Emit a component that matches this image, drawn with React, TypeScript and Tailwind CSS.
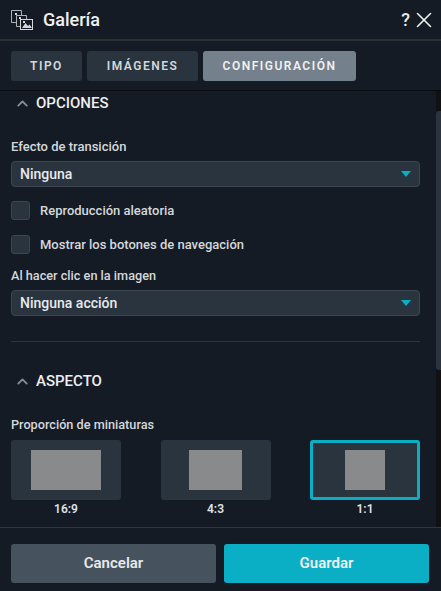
import { ChevronUp, X } from "lucide-react";

function GalleryIcon() {
  return (
    <svg width="22" height="20" viewBox="0 0 22 20" fill="none" className="text-[#d5d8db]">
      <path d="M5.5 12.5H0.5V0.5H10.5V5" stroke="currentColor" strokeWidth="1" opacity="0.8" />
      <path d="M10 16.5H5.5V5.5H15.5V9" stroke="currentColor" strokeWidth="1" opacity="0.8" />
      <rect x="9.5" y="9.5" width="12" height="10" fill="#141b25" stroke="currentColor" strokeWidth="1" />
      <path d="M11 18L14.5 13L17 16L18.5 14.5L21 18Z" fill="currentColor" />
      <rect x="4" y="3" width="2" height="2" fill="currentColor" />
      <rect x="8" y="7" width="2" height="2" fill="currentColor" />
      <rect x="12" y="11" width="2" height="2" fill="currentColor" />
    </svg>
  );
}

function Select({ value }: { value: string }) {
  return (
    <div className="flex h-[26px] items-center justify-between rounded-[4px] border border-[#3d4650] bg-[#2a343f] pl-2 pr-2">
      <span className="text-[14px] font-medium text-[#e8eaec]">{value}</span>
      <div className="h-0 w-0 border-x-[5px] border-t-[6px] border-x-transparent border-t-[#0aafc6]" />
    </div>
  );
}

function Check({ label }: { label: string }) {
  return (
    <div className="flex items-center gap-[10px]">
      <div className="h-[19px] w-[19px] rounded-[3px] border border-[#3d4650] bg-[#2a343f]" />
      <span className="text-[13px] font-medium text-[#d5d8db]">{label}</span>
    </div>
  );
}

function SectionTitle({ title }: { title: string }) {
  return (
    <div className="flex items-center gap-[5px] pl-[3px]">
      <ChevronUp size={17} strokeWidth={2.5} className="text-[#8a8f94]" />
      <span className="text-[15px] font-medium text-[#eceef0]">{title}</span>
    </div>
  );
}

function Thumb({ label, w, active }: { label: string; w: string; active?: boolean }) {
  return (
    <div className="flex w-[110px] flex-col items-center">
      <div
        className={
          "flex h-[60px] w-full items-center justify-center rounded-[3px] bg-[#2a343f] " +
          (active ? "border-[3px] border-[#0aafc6]" : "")
        }
      >
        <div className={"h-[40px] bg-[#898a8c] " + w} />
      </div>
      <span className="mt-[1px] text-xs font-semibold text-[#dfe1e3]">{label}</span>
    </div>
  );
}

export default function App() {
  return (
    <div className="flex h-[591px] w-[441px] flex-col overflow-hidden bg-[#141b25] font-['Roboto',sans-serif]">
      <header className="flex h-[41px] shrink-0 items-center border-b-2 border-[#2b2d30] pl-[11px] pr-[4px]">
        <GalleryIcon />
        <span className="ml-[10px] text-lg font-medium text-[#f0f1f2]">Galería</span>
        <span className="ml-auto text-lg font-medium text-[#e8eaec]">?</span>
        <X size={26} strokeWidth={1.5} className="ml-[1px] text-[#eceef0]" />
      </header>

      <nav className="flex h-[50px] shrink-0 items-center gap-[5px] border-b border-[#080b10] px-[11px]">
        <button className="h-[30px] w-[71px] rounded-[3px] bg-[#2a343f] text-xs font-semibold tracking-[1.5px] text-[#d5d8db]">TIPO</button>
        <button className="h-[30px] w-[111px] rounded-[3px] bg-[#2a343f] text-xs font-semibold tracking-[1.5px] text-[#d5d8db]">IMÁGENES</button>
        <button className="h-[30px] w-[153px] rounded-[3px] bg-[#74808c] text-xs font-semibold tracking-[1.5px] text-[#f0f1f2]">CONFIGURACIÓN</button>
      </nav>

      <div className="relative min-h-0 flex-1 overflow-hidden pl-[11px] pr-[21px] pt-[1px]">
        <div className="absolute bottom-0 right-0 top-0 w-[5px] bg-[#0f1114]">
          <div className="mt-[20px] h-[259px] w-full rounded-l-[3px] bg-[#2a343f]" />
        </div>
        <SectionTitle title="OPCIONES" />
        <p className="mt-[22px] text-[13px] font-medium text-[#d5d8db]">Efecto de transición</p>
        <div className="mt-[5px]"><Select value="Ninguna" /></div>
        <div className="mt-[14px] flex flex-col gap-[14px]">
          <Check label="Reproducción aleatoria" />
          <Check label="Mostrar los botones de navegación" />
        </div>
        <p className="mt-[12px] text-[12.7px] font-medium text-[#d5d8db]">Al hacer clic en la imagen</p>
        <div className="mt-[5px]"><Select value="Ninguna acción" /></div>
        <div className="mt-[25px] border-t border-[#2e343b]" />
        <div className="mt-[28px]"><SectionTitle title="ASPECTO" /></div>
        <p className="mt-[22px] text-[12.7px] font-medium text-[#d5d8db]">Proporción de miniaturas</p>
        <div className="mt-[6px] flex justify-between">
          <Thumb label="16:9" w="w-[70px]" />
          <Thumb label="4:3" w="w-[53px]" />
          <Thumb label="1:1" w="w-[40px]" active />
        </div>
      </div>

      <footer className="flex h-[64px] shrink-0 gap-2 border-t border-[#33363a] px-[11px] pt-[16px]">
        <button className="h-[39px] w-[205px] rounded-[3px] bg-[#46535f] text-[15px] font-semibold text-[#e8eaec]">Cancelar</button>
        <button className="h-[39px] w-[205px] rounded-[3px] bg-[#0aafc6] text-[15px] font-semibold text-[#f0f1f2]">Guardar</button>
      </footer>
    </div>
  );
}
